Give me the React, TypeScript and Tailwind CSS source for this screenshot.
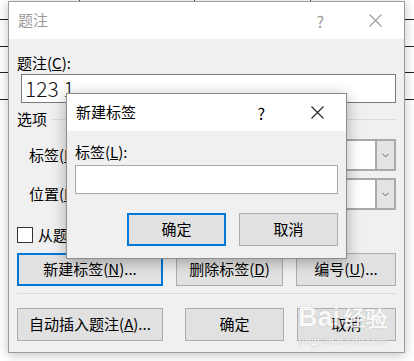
import { ChevronDown } from "lucide-react";

const font = "font-['Microsoft_YaHei_UI','Noto_Sans_CJK_SC',sans-serif]";

function CloseIcon({ color }: { color: string }) {
  return (
    <svg width="13" height="13" viewBox="0 0 13 13">
      <path d="M0.5 0.5 L12.5 12.5 M12.5 0.5 L0.5 12.5" stroke={color} strokeWidth="1.1" fill="none" />
    </svg>
  );
}

function Combo() {
  return (
    <div className="flex h-[32px] flex-1 border-2 border-[#a9a9a9] bg-white">
      <div className="flex-1" />
      <div className="flex w-[19px] items-center justify-center border-l-2 border-[#a9a9a9] bg-[#e3e3e3]">
        <ChevronDown size={11} strokeWidth={1.5} className="text-[#333]" />
      </div>
    </div>
  );
}

function Btn({ children, focus, w }: { children: React.ReactNode; focus?: boolean; w: string }) {
  return (
    <div
      className={`flex h-[33px] items-center justify-center bg-[#e1e1e1] text-[15px] text-black ${w} ${
        focus ? "border-2 border-[#0078d7]" : "border border-[#adadad]"
      }`}
    >
      {children}
    </div>
  );
}

export default function App() {
  return (
    <div className={`relative h-[361px] w-[414px] overflow-hidden bg-white ${font}`}>
      {/* document behind the dialogs */}
      <div className="flex flex-col">
        <div className="flex h-[20px] border-b border-[#222]">
          <div className="w-[80px] border-r border-[#444]" />
          <div className="w-[115px] border-r border-[#444]" />
          <div className="w-[116px] border-r border-[#444]" />
        </div>
        <div className="h-[27px] border-b border-[#222]" />
        <div className="h-[26px] border-b border-[#222]" />
        <div className="h-[27px] border-b border-[#222]" />
      </div>

      {/* main dialog */}
      <div className="absolute left-[8px] top-[1px] flex h-[352px] w-[397px] flex-col border border-[#9c9c9c] bg-[#f0f0f0] shadow-[0_2px_10px_rgba(0,0,0,0.25)]">
        <div className="flex h-[37px] items-center bg-white pl-[9px] pr-[22px]">
          <span className="flex-1 text-[15px] text-[#9a9a9a]">题注</span>
          <span className="mr-[45px] text-[16px] text-[#9a9a9a]">?</span>
          <CloseIcon color="#9a9a9a" />
        </div>
        <div className="flex flex-col px-[8px]">
          <div className="mt-[14px] h-[20px] text-[15px] leading-[20px] text-black">
            题注(<span className="underline">C</span>):
          </div>
          <div className="mt-[1px] ml-[4px] flex h-[29px] items-center border border-[#7a7a7a] bg-white px-[3px] text-[21px] font-light text-[#111]">
            123 1
          </div>
          <div className="mt-[6px] flex h-[20px] items-center gap-[4px] text-[15px] text-black">
            <span>选项</span>
            <div className="h-px flex-1 bg-[#dcdcdc]" />
          </div>
          <div className="mt-[10px] flex items-center pl-[12px]">
            <span className="w-[78px] text-[15px] text-black">
              标签(<span className="underline">L</span>):
            </span>
            <Combo />
          </div>
          <div className="mt-[7px] flex items-center pl-[12px]">
            <span className="w-[78px] text-[15px] text-black">
              位置(<span className="underline">P</span>):
            </span>
            <Combo />
          </div>
          <div className="mt-[17px] flex h-[16px] items-center gap-[5px]">
            <div className="h-[16px] w-[16px] border border-[#333] bg-white" />
            <span className="text-[15px] text-black">从题注中排除标签(E)</span>
          </div>
          <div className="mt-[10px] flex gap-[13px]">
            <Btn w="w-[146px]" focus>
              新建标签(<span className="underline">N</span>)...
            </Btn>
            <Btn w="w-[107px]">
              删除标签(<span className="underline">D</span>)
            </Btn>
            <Btn w="w-[100px]">
              编号(<span className="underline">U</span>)...
            </Btn>
          </div>
          <div className="mt-[7px] h-px bg-[#dcdcdc]" />
          <div className="mt-[14px] flex">
            <Btn w="w-[146px]">
              自动插入题注(<span className="underline">A</span>)...
            </Btn>
            <div className="w-[22px]" />
            <Btn w="w-[99px]">确定</Btn>
            <div className="w-[13px]" />
            <Btn w="w-[99px]">取消</Btn>
          </div>
        </div>
      </div>

      {/* watermark */}
      <div className="pointer-events-none absolute left-[298px] top-[302px] flex flex-col items-start text-white opacity-80">
        <span className="font-['Liberation_Sans',sans-serif] text-[27px] font-bold leading-[30px] [text-shadow:0_0_1px_#999]">
          Bai<span className="ml-[4px] text-[22px]">经验</span>
        </span>
        <span className="font-['Liberation_Serif',serif] text-[12px] leading-[14px] [text-shadow:0_0_1px_#999]">
          jingyan.baidu.com
        </span>
      </div>

      {/* new label dialog */}
      <div className="absolute left-[66px] top-[93px] flex h-[166px] w-[281px] flex-col border border-[#8e8e8e] bg-[#f0f0f0] shadow-[0_3px_14px_rgba(0,0,0,0.3)]">
        <div className="flex h-[37px] items-center bg-white pl-[9px] pr-[22px]">
          <span className="flex-1 text-[15px] text-black">新建标签</span>
          <span className="mr-[46px] text-[16px] text-black">?</span>
          <CloseIcon color="#222" />
        </div>
        <div className="flex flex-col px-[8px]">
          <div className="mt-[11px] h-[20px] text-[15px] leading-[20px] text-black">
            标签(<span className="underline">L</span>):
          </div>
          <div className="mt-[3px] h-[29px] border border-[#a8a8a8] bg-white" />
          <div className="mt-[19px] flex justify-end gap-[13px]">
            <Btn w="w-[99px]" focus>
              确定
            </Btn>
            <Btn w="w-[99px]">取消</Btn>
          </div>
        </div>
      </div>
    </div>
  );
}
